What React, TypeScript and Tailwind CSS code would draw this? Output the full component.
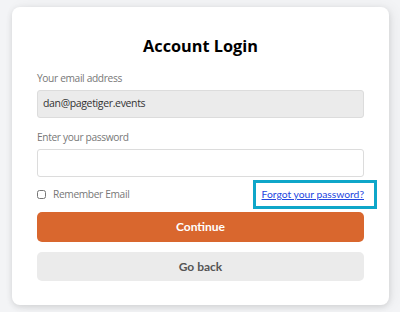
import { useState } from "react";

const sans = "font-['Open_Sans','Liberation_Sans',sans-serif]";
const lato = "font-['Lato','Liberation_Sans',sans-serif]";

const AccountLogin = () => {
  const [remember, setRemember] = useState(false);
  const [password, setPassword] = useState("");

  return (
    <div className={`min-h-[312px] w-[400px] bg-[#f3f4f6] px-3 pt-[7px] ${sans}`}>
      <div className="w-[377px] rounded-lg bg-white px-[25px] pt-[26px] pb-[24px] shadow-[0_2px_6px_rgba(0,0,0,0.12),4px_0_14px_rgba(0,0,0,0.05)]">
        <h1 className="text-center text-[16.3px] leading-[26px] font-bold text-black">Account Login</h1>

        <label className="block mt-[10px] text-[10.2px] tracking-[-0.35px] leading-[18px] text-[#777]">Your email address</label>
        <div className="mt-[3px] h-[28px] rounded-[3px] border border-[#dcdcdc] bg-[#ebebeb] px-[5px] flex items-center text-[10.5px] tracking-[-0.35px] text-[#333]">
          dan@pagetiger.events
        </div>

        <label className="block mt-[10px] text-[10.2px] tracking-[-0.35px] leading-[18px] text-[#777]">Enter your password</label>
        <input
          type="password"
          value={password}
          onChange={(e) => setPassword(e.target.value)}
          className="mt-[3px] block w-full h-[28px] rounded-[3px] border border-[#dcdcdc] bg-white px-[5px] text-[12px] outline-none"
        />

        <div className="h-[35px] flex items-center justify-between">
          <label className="flex items-center gap-[7px] text-[10.2px] tracking-[-0.35px] text-[#777]">
            <input
              type="checkbox"
              checked={remember}
              onChange={() => setRemember(!remember)}
              className="w-[9px] h-[9px] m-0"
            />
            Remember Email
          </label>
          <a
            href="#"
            className={`-mr-[10px] h-[23px] pl-[6px] pr-[10px] flex items-center ring-[3px] ring-[#0ea6c9] text-[10.3px] text-[#2346e0] underline ${lato}`}
          >
            Forgot your password?
          </a>
        </div>

        <button className={`block w-full h-[30px] rounded-[5px] bg-[#d9672e] text-white text-[12px] font-bold ${lato}`}>
          Continue
        </button>
        <button className={`block mt-[10px] w-full h-[29px] rounded-[5px] bg-[#ebebeb] text-[#555] text-[12px] font-bold ${lato}`}>
          Go back
        </button>
      </div>
    </div>
  );
};

export default function App() {
  return <AccountLogin />;
}
